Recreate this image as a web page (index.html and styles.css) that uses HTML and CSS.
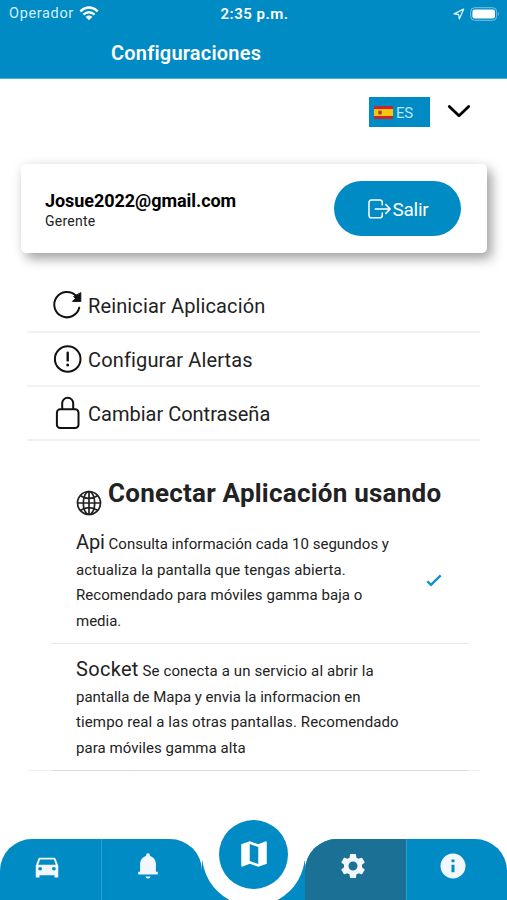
FILE: index.html
```html
<!DOCTYPE html>
<html lang="es">
<head>
<meta charset="utf-8">
<meta name="viewport" content="width=device-width, initial-scale=1">
<title>Configuraciones</title>
<link rel="stylesheet" href="styles.css">
</head>
<body>
<div class="app">
  <header class="header">
    <div class="status">
      <div class="carrier"><span>Operador</span>
        <svg width="20" height="15" viewBox="0 0 20 15" fill="none" stroke="#fff" stroke-width="2.4"><path d="M1.3 5.3Q10-2.2 18.7 5.3M4.4 8.7Q10 4 15.6 8.7"/><path d="M6.7 11Q10 8.2 13.3 11L10 14.2Z" fill="#fff" stroke="none"/></svg>
      </div>
      <span class="time">2:35 p.m.</span>
      <div class="indicators">
        <svg width="12" height="12" viewBox="0 0 12 12" fill="none" stroke="#d9f1fb" stroke-width="1.3" stroke-linejoin="round"><path d="M10.6 1.2 1 5.8l4.6.7.8 4.3Z"/></svg>
        <svg width="30" height="14" viewBox="0 0 30 14"><rect x=".7" y=".7" width="26" height="12.6" rx="4" fill="none" stroke="#7cc3e3" stroke-width="1"/><rect x="2.4" y="2.4" width="22.6" height="9.2" rx="2.4" fill="#fff"/><path d="M28 5q1.7 2 0 4Z" fill="#7cc3e3"/></svg>
      </div>
    </div>
    <h1 class="title">Configuraciones</h1>
  </header>

  <div class="language">
    <div class="lang-box">
      <svg width="19" height="13" viewBox="0 0 19 13"><rect width="19" height="13" rx="1" fill="#c9252b"/><rect y="3" width="19" height="7" fill="#fcc40f"/><rect x="4" y="4.6" width="4" height="4" rx="1" fill="#b5652b"/><rect x="5" y="5.5" width="2" height="2" fill="#a8322b"/></svg>
      <span>ES</span>
    </div>
    <svg class="chevron" width="24" height="15" viewBox="0 0 24 15" fill="none" stroke="#000" stroke-width="2.8" stroke-linecap="round" stroke-linejoin="round"><path d="M2.3 2.5 12 11.8 21.7 2.5"/></svg>
  </div>

  <section class="card">
    <div class="user">
      <div class="email">Josue2022@gmail.com</div>
      <div class="role">Gerente</div>
    </div>
    <button class="logout">
      <svg width="24" height="20" viewBox="0 0 24 20" fill="none" stroke="#fff" stroke-width="1.5" stroke-linecap="round" stroke-linejoin="round"><path d="M14.3 6V3.6Q14.3 1 11.7 1H3.6Q1 1 1 3.6V16.2Q1 18.8 3.6 18.8H11.7Q14.3 18.8 14.3 16.2V14M7.3 10H22M17.8 5.6 22.2 10l-4.4 4.4"/></svg>
      <span>Salir</span>
    </button>
  </section>

  <ul class="menu">
    <li class="item">
      <svg width="32" height="32" viewBox="0 0 32 32" fill="none" stroke="#111" stroke-width="2" stroke-linecap="round"><path d="M27.3 18.6A12.7 12.7 0 1 1 24 6.7"/><path d="M28.800 4v8.400h-8.400l3-3-1.600-1.600Z" fill="#111" stroke-width="1" stroke-linejoin="round"/></svg>
      <span class="t1">Reiniciar Aplicación</span>
    </li>
    <li class="item">
      <svg width="32" height="32" viewBox="0 0 32 32" fill="none" stroke="#111" stroke-width="2"><circle cx="15.7" cy="16" r="12.8"/><path d="M15.700 9.800v7.600" stroke-width="2.4" stroke-linecap="round"/><circle cx="15.7" cy="22" r="1.5" fill="#111" stroke="none"/></svg>
      <span class="t2">Configurar Alertas</span>
    </li>
    <li class="item">
      <svg width="32" height="34" viewBox="0 0 32 34" fill="none" stroke="#111" stroke-width="2"><rect x="4.9" y="13.3" width="21.6" height="18.8" rx="3.4"/><path d="M10.2 13V7.300a5.500 5.500 0 0 1 11 0V13"/></svg>
      <span>Cambiar Contraseña</span>
    </li>
  </ul>

  <section class="connect">
    <h2 class="heading">
      <svg width="26" height="26" viewBox="0 0 26 26" fill="none" stroke="#222" stroke-width="1.7"><circle cx="13" cy="13" r="11.5"/><ellipse cx="13" cy="13" rx="5.7" ry="11.5"/><path d="M13 1.5v23M1.5 13h23M4.5 5.700Q13 11.200 21.500 5.700M4.500 20.300Q13 14.800 21.500 20.300"/></svg>
      <span>Conectar Aplicación usando</span>
    </h2>
    <div class="option">
      <p class="copy">
        <span class="line lead"><b class="api">Api</b> Consulta información cada 10 segundos y</span>
        <span class="line wide">actualiza la pantalla que tengas abierta.</span>
        <span class="line mid">Recomendado para móviles gamma baja o</span>
        <span class="line">media.</span>
      </p>
      <svg class="check" width="16" height="13" viewBox="0 0 16 13" fill="none" stroke="#0c91c8" stroke-width="2.3"><path d="M1.3 7.2 5 10.8 14.7 1.4"/></svg>
    </div>
    <div class="option last">
      <p class="copy">
        <span class="line lead wide"><b class="socket">Socket</b> Se conecta a un servicio al abrir la</span>
        <span class="line">pantalla de Mapa y envia la informacion en</span>
        <span class="line wide">tiempo real a las otras pantallas. Recomendado</span>
        <span class="line mid">para móviles gamma alta</span>
      </p>
    </div>
  </section>

  <nav class="tabs">
    <div class="group">
      <a class="tab"><svg class="car" width="30" height="28" viewBox="0 0 24 24" preserveAspectRatio="none"><path d="M18.920 5.010C18.720 4.420 18.160 4 17.500 4h-11c-.66 0-1.210.42-1.420 1.010L3 11v10h3v-2h12v2h3V11l-2.080-5.990zM6.500 15a1.500 1.500 0 1 1 0-3 1.500 1.500 0 0 1 0 3zm11 0a1.500 1.500 0 1 1 0-3 1.500 1.500 0 0 1 0 3zM5 10l1.500-4.500h11L19 10z"/></svg></a>
      <a class="tab"><svg width="28" height="30" viewBox="0 0 24 24" preserveAspectRatio="none"><path d="M12 22c1.200 0 2.100-.7 2.100-1.600H9.900c0 .9.900 1.600 2.100 1.600zM18.800 16.600V10.800c0-3.300-1.800-6-5.200-6.800V3.400a1.600 1.600 0 0 0-3.200 0V4C7 4.800 5.200 7.500 5.200 10.800v5.800H3.600v2.200h16.800v-2.200z"/></svg></a>
    </div>
    <div class="center">
      <a class="map"><svg width="34" height="34" viewBox="0 0 24 24"><path d="M20.500 3l-.16.030L15 5.100 9 3 3.360 4.900c-.21.070-.36.250-.36.480V20.500c0 .28.220.5.500.5l.16-.030L9 18.900l6 2.100 5.640-1.900c.21-.070.360-.250.360-.480V3.500c0-.28-.220-.5-.500-.5zM15 19l-6-2.110V5l6 2.110z"/></svg></a>
    </div>
    <div class="group">
      <a class="tab active"><svg width="30" height="30" viewBox="0 0 24 24"><path d="M19.140 12.940c.040-.300.060-.610.060-.940s-.020-.640-.070-.940l2.030-1.580c.180-.140.230-.410.120-.610l-1.920-3.320c-.120-.220-.370-.290-.590-.220l-2.390.960c-.500-.380-1.030-.700-1.620-.940L14.400 2.810c-.040-.240-.240-.410-.480-.410h-3.840c-.240 0-.430.170-.470.410l-.360 2.540c-.590.240-1.130.570-1.620.940l-2.390-.960c-.220-.080-.470 0-.590.220L2.740 8.870c-.120.210-.080.470.120.610l2.030 1.580c-.050.300-.090.630-.090.940s.020.640.070.940l-2.030 1.580c-.180.140-.230.410-.120.610l1.920 3.320c.120.220.370.290.590.220l2.390-.960c.500.380 1.030.700 1.620.940l.360 2.540c.050.240.240.410.480.410h3.840c.240 0 .440-.170.470-.410l.360-2.540c.590-.240 1.130-.560 1.620-.940l2.390.960c.220.080.470 0 .590-.220l1.920-3.320c.120-.220.070-.470-.120-.610zM12 15.600a3.600 3.600 0 1 1 0-7.200 3.600 3.600 0 0 1 0 7.200z"/></svg></a>
      <a class="tab"><svg width="30" height="30" viewBox="0 0 24 24"><path d="M12 2a10 10 0 1 0 0 20 10 10 0 0 0 0-20zm1.200 15h-2.400v-6h2.400zm0-8h-2.400V6.800h2.400z"/></svg></a>
    </div>
  </nav>
</div>
</body>
</html>
```
FILE: styles.css
```css
* { box-sizing: border-box; margin: 0; padding: 0; }

body {
  background: #fff;
  color: #222;
  font-family: Roboto, "Liberation Sans", sans-serif;
}

svg { display: block; flex: none; }

.app { display: flex; flex-direction: column; height: 900px; overflow: hidden; }

.header { flex: none; height: 79px; background: #008bc4; color: #fff; border-bottom: 1px solid #4fb2d9; }
.status { display: grid; grid-template-columns: 1fr auto 1fr; height: 27px; align-items: center; padding: 0 7px 0 9px; font-size: 14px; }
.carrier { display: flex; align-items: center; gap: 5px; color: #d5f0fb; font-size: 14.5px; letter-spacing: .65px; }
.time { font-weight: 600; font-size: 15px; letter-spacing: .5px; }
.indicators { display: flex; align-items: center; justify-content: flex-end; gap: 5px; }
.title { padding-left: 111px; font-size: 20px; line-height: 53px; font-weight: 600; letter-spacing: .2px; }

.language { flex: none; display: flex; height: 85px; padding: 18px 36px 0 0; justify-content: flex-end; gap: 17px; }
.lang-box { display: flex; width: 61px; height: 30px; padding-left: 5px; align-items: center; gap: 3px; background: #008bc4; color: #b8e6f8; font-size: 15px; }
.lang-box span { padding-top: 1px; letter-spacing: -.3px; }
.chevron { margin-top: 7px; }

.card { flex: none; display: flex; height: 89px; margin: 0 20px 0 21px; padding: 0 26px 0 24px; align-items: center; justify-content: space-between; border-radius: 5px; box-shadow: 5px 6px 12px rgba(0, 0, 0, .34), 0 0 14px rgba(0, 0, 0, .06); }
.user { padding-top: 2px; }
.email { color: #000; font-size: 18px; font-weight: 700; line-height: 22px; letter-spacing: -.05px; }
.role { font-size: 14px; line-height: 18px; letter-spacing: .25px; }
.logout { display: flex; width: 127px; height: 55px; padding-left: 1px; align-items: center; justify-content: center; gap: 1px; border: 0; border-radius: 28px; background: #008bc4; color: #fff; font: 400 19px Roboto, sans-serif; letter-spacing: -.3px; }
.logout span { padding-top: 2px; }

.menu { flex: none; list-style: none; margin: 26px 27px 0; }
.item { display: flex; height: 54px; padding-left: 25px; align-items: center; gap: 4px; border-bottom: 2px solid #f2f2f2; font-size: 20px; }
.item span { padding-top: 2px; }
.t1 { letter-spacing: .13px; }
.t2 { letter-spacing: .15px; }

.connect { flex: none; height: 330px; margin: 0 27px; padding: 33px 12px 0 25px; border-bottom: 1px solid #efefef; }
.heading { display: flex; height: 41px; padding-left: 24px; gap: 6px; font-size: 26px; line-height: 39px; font-weight: 700; letter-spacing: .23px; white-space: nowrap; }
.heading svg { margin-top: 16px; }
.option { display: flex; height: 129px; padding: 15px 26px 0 24px; justify-content: space-between; border-bottom: 1px solid #e8e8e8; }
.option.last { height: 127px; padding-top: 13px; border-bottom-color: #d9d9d9; }
.copy { font-size: 15px; }
.line { display: block; height: 25.7px; line-height: 28.7px; white-space: nowrap; }
.lead { line-height: 25.7px; }
.wide { letter-spacing: .12px; }
.mid { letter-spacing: .05px; }
.line b { font-size: 20px; font-weight: 400; }
.api { letter-spacing: -.1px; }
.socket { letter-spacing: .3px; }
.check { margin-top: 44px; }

.tabs { display: flex; flex: none; height: 61px; margin-top: 68px; background: linear-gradient(#008bc4, #008bc4) center bottom / 103px 39px no-repeat; }
.group { display: flex; width: 202px; overflow: hidden; border-radius: 32px 32px 0 0; background: #008bc4; }
.tab { display: flex; width: 101px; align-items: center; justify-content: center; padding: 0 7px 7px 0; }
.tab + .tab { padding-right: 9px; border-left: 1px solid #2a9fd0; }
.tab.active { padding-right: 5px; background: #1b7195; }
.tab svg { fill: #f1f7fd; }
.tab .car { margin-top: 1px; }
.center { display: flex; width: 103px; height: 104px; margin-top: -37px; align-items: center; justify-content: center; border-radius: 50%; background: #fff; }
.map { display: flex; width: 69px; height: 69px; align-items: center; justify-content: center; border-radius: 50%; background: #008bc4; }
.map svg { fill: #fff; }
```
